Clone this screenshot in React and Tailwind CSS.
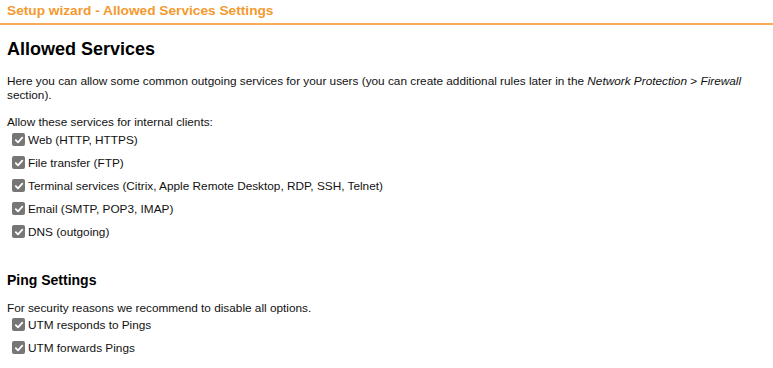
import React from "react";

function Check({ label }) {
  return (
    <div className="flex items-center h-[23px] pl-[12px]">
      <span className="w-[13px] h-[13px] rounded-[2px] bg-[#767676] flex items-center justify-center mr-[3px]">
        <svg width="10" height="10" viewBox="0 0 10 10">
          <path d="M1.8 5.2 L4 7.4 L8.3 2.6" fill="none" stroke="white" strokeWidth="1.8" strokeLinecap="round" strokeLinejoin="round" />
        </svg>
      </span>
      <span>{label}</span>
    </div>
  );
}

export default function App() {
  return (
    <div className="w-[773px] h-[368px] bg-white text-[11.8px] text-[#111] leading-[14px] overflow-hidden" style={{ fontFamily: '"Liberation Sans", Arial, sans-serif' }}>
      <div className="h-[25px] border-b-2 border-[#fbac58] px-[7px] pt-[3px]">
        <span className="text-[13.7px] font-bold text-[#f39a2e] leading-[16px]">Setup wizard - Allowed Services Settings</span>
      </div>
      <div className="px-[7px]">
        <h1 className="text-[18px] font-bold leading-[22px] mt-[13px] text-black">Allowed Services</h1>
        <p className="mt-[14px]">
          Here you can allow some common outgoing services for your users (you can create additional rules later in the <i>Network Protection</i> &gt; <i>Firewall</i> section).
        </p>
        <p className="mt-[13px]">Allow these services for internal clients:</p>
        <div className="-ml-[7px] -mt-[1px]">
          <Check label="Web (HTTP, HTTPS)" />
          <Check label="File transfer (FTP)" />
          <Check label="Terminal services (Citrix, Apple Remote Desktop, RDP, SSH, Telnet)" />
          <Check label="Email (SMTP, POP3, IMAP)" />
          <Check label="DNS (outgoing)" />
        </div>
        <h2 className="text-[14px] font-bold leading-[17px] mt-[29px] text-black">Ping Settings</h2>
        <p className="mt-[12px]">For security reasons we recommend to disable all options.</p>
        <div className="-ml-[7px] -mt-[2px]">
          <Check label="UTM responds to Pings" />
          <Check label="UTM forwards Pings" />
        </div>
      </div>
    </div>
  );
}
